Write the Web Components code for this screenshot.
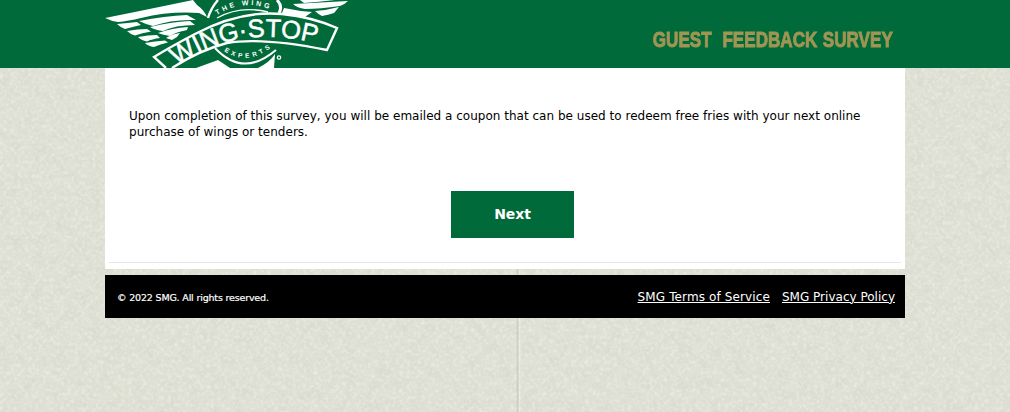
<!DOCTYPE html>
<html>
<head>
<meta charset="utf-8">
<title>Guest Feedback Survey</title>
<style>
    html, body { margin: 0; padding: 0; height: 100%; }
    body { overflow: hidden; font-family: "DejaVu Sans", Verdana, sans-serif; }
</style>
</head>
<body>
<survey-page>
    <survey-header slot="header" title-text="GUEST  FEEDBACK SURVEY"></survey-header>
    <survey-card>
        <p>Upon completion of this survey, you will be emailed a coupon that can be used to redeem free fries with your next online purchase of wings or tenders.</p>
    </survey-card>
    <survey-footer></survey-footer>
</survey-page>

<script>
// paper texture, drawn with a turbulence filter so no raster is needed
const paperSvg = `<svg xmlns="http://www.w3.org/2000/svg" width="1010" height="412"><filter id="n" x="0" y="0" width="100%" height="100%"><feTurbulence type="fractalNoise" baseFrequency="0.09" numOctaves="5" seed="7"/><feColorMatrix values="0 0 0 0 0.55 0 0 0 0 0.55 0 0 0 0 0.5 1.8 0 0 0 -0.72"/></filter><filter id="s" x="0" y="0" width="100%" height="100%"><feTurbulence type="fractalNoise" baseFrequency="0.28" numOctaves="3" seed="21"/><feColorMatrix values="0 0 0 0 0.96 0 0 0 0 0.96 0 0 0 0 0.93 2 0 0 0 -0.85"/></filter><rect width="1010" height="412" fill="#dfe0d4"/><rect width="1010" height="412" filter="url(#n)" opacity=".26"/><rect width="1010" height="412" filter="url(#s)" opacity=".45"/></svg>`;

class SurveyPage extends HTMLElement {
    constructor() {
        super();
        this.attachShadow({ mode: 'open' });
    }

    connectedCallback() {
        const paper = encodeURIComponent(paperSvg);
        this.shadowRoot.innerHTML = `
            <style>
                :host {
                    display: block;
                    height: 412px;
                    overflow: hidden;
                    background-color: #dfe0d4;
                    background-image:
                        linear-gradient(90deg, transparent 516px, rgba(120,120,100,.08) 517px, rgba(110,110,90,.26) 518px, rgba(255,255,245,.45) 519px, rgba(255,255,245,.15) 520px, transparent 522px),
                        url("data:image/svg+xml,${paper}");
                }
                .column {
                    width: 800px;
                    margin: 0 auto;
                    display: flex;
                    flex-direction: column;
                }
            </style>
            <slot name="header"></slot>
            <div class="column"><slot></slot></div>
        `;
    }
}

class SurveyHeader extends HTMLElement {
    constructor() {
        super();
        this.attachShadow({ mode: 'open' });
    }

    connectedCallback() {
        this.shadowRoot.innerHTML = `
            <style>
                :host {
                    display: block;
                    height: 68px;
                    background: #006a3a;
                    overflow: hidden;
                }
                .inner {
                    width: 800px;
                    height: 68px;
                    margin: 0 auto;
                    display: flex;
                    justify-content: space-between;
                    align-items: flex-start;
                }
                h1 {
                    flex: none;
                    margin: 28px 12px 0 0;
                    font: 700 22.5px/24px "Liberation Sans", sans-serif;
                    color: #a09553;
                    white-space: pre;
                    word-spacing: .8px;
                    -webkit-text-stroke: .9px #a09553;
                    transform: scaleX(.76);
                    transform-origin: right center;
                }
                wing-logo { flex: none; }
            </style>
            <div class="inner">
                <wing-logo></wing-logo>
                <h1>${this.getAttribute('title-text')}</h1>
            </div>
        `;
    }
}

class WingLogo extends HTMLElement {
    constructor() {
        super();
        this.attachShadow({ mode: 'open' });
    }

    connectedCallback() {
        this.shadowRoot.innerHTML = `
            <style>
                :host { display: block; width: 245px; height: 68px; }
                svg { display: block; }
                text { fill: #fff; font-family: "Liberation Sans", sans-serif; }
            </style>
            <svg width="245" height="68" viewBox="105 0 245 68">
                <defs>
                    <path id="word" d="M177 66 Q213 40 258 37 Q292 36 322 45"/>
                    <path id="top" d="M217 15 Q244 -2 271 10"/>
                    <path id="bot" d="M224 51 Q247 67 273 46"/>
                </defs>
                <!-- left wing -->
                <g fill="#fff">
                    <path d="M105 18 Q145 10 193 0 L197 5 Q204 10 207 17 L199 13 Q170 11 141 18 Q128 21 118 22 Q111 21 105 18Z"/>
                    <path d="M117 24 Q128 23 137 22 L141 25 Q132 27 125 29 Q120 27 117 24Z"/>
                    <path d="M139 21 Q165 16 187 15 L196 20 Q172 19 153 26 Q145 24 139 21Z"/>
                    <path d="M127 31 Q138 29 147 29 L151 31.5 Q142 33 135 35.5 Q130 34 127 31Z"/>
                    <path d="M150 27 Q170 22 190 21 L195 25 Q175 25 163 31 Q155 30 150 27Z"/>
                    <path d="M138 37 Q148 35 157 35 L160 38 Q152 39 147 41.5 Q141 40 138 37Z"/>
                    <path d="M158 33 Q172 28 188 27 L187 30 Q176 32 170 36 Q163 35 158 33Z"/>
                    <path d="M145 43 Q155 41 165 40.5 L168 42.5 Q160 44 154 47 Q148 46 145 43Z"/>
                    <path d="M166 38 Q172 34 180 33 L177 37 L172 40Z"/>
                    <!-- right wing -->
                    <path d="M293 4 L348 1 Q344 5 340 6 Q320 9 305 9 Q297 8 293 4Z"/>
                    <path d="M300 0 L335 0 Q318 2 304 3Z"/>
                    <path d="M315 11 Q328 10 339 7 L334 13 Q328 15 322 16 Q318 14 315 11Z"/>
                    <path d="M284 8 Q298 11 312 12 L305 17 Q292 18 282 13Z"/>
                </g>
                <!-- medallion rings -->
                <g fill="none" stroke="#fff">
                    <path d="M208 18 Q211 8 218 0" stroke-width="2.4"/>
                    <path d="M277 0 Q283 6 279 13" stroke-width="3"/>
                    <path d="M217 18 Q240 5 268 12" stroke-width="1.3"/>
                </g>
                <text font-size="7" font-weight="700"><textPath href="#top" textLength="54">THE WING</textPath></text>
                <!-- feet under the medallion -->
                <path d="M196 68 L218 60 L230 68Z M258 68 Q270 62 275 54 L274 68Z" fill="#fff"/>
                <!-- banner -->
                <path d="M172 68 Q200 50 227 43 Q262 37 327 50 L337 28 Q312 17 282 14 Q240 10 195 34 Q172 46 154 57 L166 68" fill="#006a3a" stroke="#fff" stroke-width="2.4"/>
                <text font-size="25.5" stroke="#fff" stroke-width=".5"><textPath href="#word" textLength="146" lengthAdjust="spacing">WING·STOP</textPath></text>
                <!-- ring and lettering below the banner -->
                <path d="M215 48 Q243 78 276 50" fill="none" stroke="#fff" stroke-width="2"/>
                <text font-size="6.5" font-weight="700"><textPath href="#bot" textLength="50">EXPERTS</textPath></text>
                <circle cx="279" cy="57.5" r="2.3" fill="#fff"/>
                <circle cx="279" cy="57.5" r="1.1" fill="#006a3a"/>
            </svg>
        `;
    }
}

class SurveyCard extends HTMLElement {
    constructor() {
        super();
        this.attachShadow({ mode: 'open' });
    }

    connectedCallback() {
        this.shadowRoot.innerHTML = `
            <style>
                :host {
                    display: block;
                    height: 201px;
                    background: #fff;
                    padding: 40px 4px 0;
                    box-sizing: border-box;
                    font: 12px/16px "DejaVu Sans", Verdana, sans-serif;
                    letter-spacing: .015px;
                    color: #000;
                }
                .text { padding: 0 20px; height: 83px; }
                ::slotted(p) { margin: 0; }
                .actions { display: flex; justify-content: center; padding-left: 15px; }
                hr { border: 0; border-top: 1px solid #e6e6e6; margin: 24px 0 0; }
            </style>
            <div class="text"><slot></slot></div>
            <div class="actions"><survey-button>Next</survey-button></div>
            <hr>
        `;
    }
}

class SurveyButton extends HTMLElement {
    constructor() {
        super();
        this.attachShadow({ mode: 'open' });
    }

    connectedCallback() {
        this.shadowRoot.innerHTML = `
            <style>
                :host { display: block; }
                button {
                    display: block;
                    width: 123px;
                    height: 47px;
                    border: 0;
                    padding: 0 0 2px;
                    background: #006a3a;
                    color: #fff;
                    font: 700 14px "DejaVu Sans", Verdana, sans-serif;
                    letter-spacing: -.1px;
                    cursor: pointer;
                }
            </style>
            <button><slot></slot></button>
        `;
    }
}

class SurveyFooter extends HTMLElement {
    constructor() {
        super();
        this.attachShadow({ mode: 'open' });
    }

    connectedCallback() {
        this.shadowRoot.innerHTML = `
            <style>
                :host {
                    display: flex;
                    justify-content: space-between;
                    align-items: center;
                    height: 43px;
                    margin-top: 6px;
                    padding: 0 10px 0 12px;
                    background: #000;
                    color: #fff;
                    font-family: "DejaVu Sans", Verdana, sans-serif;
                }
                small { font-size: 9.5px; letter-spacing: -.17px; padding-top: 2px; -webkit-text-stroke: .2px #fff; }
                nav { display: flex; gap: 12px; font-size: 12px; letter-spacing: .12px; }
                a { color: #fff; text-decoration: underline; }
                a + a { letter-spacing: .01px; }
            </style>
            <small>© 2022 SMG. All rights reserved.</small>
            <nav>
                <a href="#">SMG Terms of Service</a>
                <a href="#">SMG Privacy Policy</a>
            </nav>
        `;
    }
}

customElements.define('survey-page', SurveyPage);
customElements.define('survey-header', SurveyHeader);
customElements.define('wing-logo', WingLogo);
customElements.define('survey-card', SurveyCard);
customElements.define('survey-button', SurveyButton);
customElements.define('survey-footer', SurveyFooter);
</script>
</body>
</html>
